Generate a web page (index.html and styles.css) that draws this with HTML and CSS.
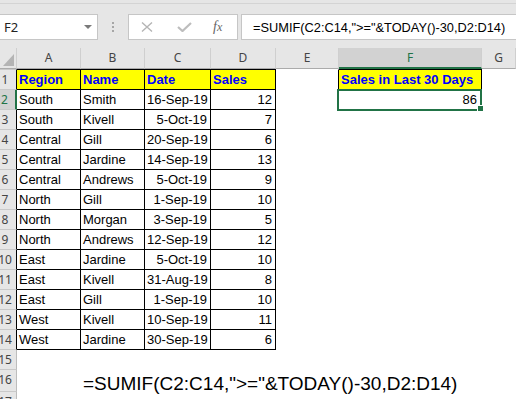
FILE: index.html
```html
<!DOCTYPE html>
<html lang="en">
<head>
  <meta charset="UTF-8" />
  <title>Sales in Last 30 Days</title>
  <link rel="stylesheet" href="styles.css">
</head>
<body>

<!-- Name box + formula bar -->
<div class="formula-bar">
  <div class="ribbon-edge"></div>
  <div class="bar-row">
    <div class="name-box"><span>F2</span><i class="caret"></i></div>
    <div class="grip"><b></b><b></b><b></b></div>
    <div class="bar-buttons">
      <svg class="btn-cancel" width="12" height="10" viewBox="0 0 12 10">
        <path d="M1 0.5 L11 9.5 M11 0.5 L1 9.5" stroke="#b5b5b5" stroke-width="1.4" fill="none"/>
      </svg>
      <svg class="btn-enter" width="15" height="10" viewBox="0 0 15 10">
        <path d="M1 5 L5.5 9 L14 1" stroke="#bdbdbd" stroke-width="2.2" fill="none"/>
      </svg>
      <span class="btn-fx"><i>f</i><i class="x">x</i></span>
    </div>
    <div class="formula-input">=SUMIF(C2:C14,"&gt;="&amp;TODAY()-30,D2:D14)</div>
  </div>
</div>

<!-- Worksheet -->
<div class="sheet" id="sheet"></div>

<script>
  const table = [
    ['Region', 'Name', 'Date', 'Sales'],
    ['South', 'Smith', '16-Sep-19', 12],
    ['South', 'Kivell', '5-Oct-19', 7],
    ['Central', 'Gill', '20-Sep-19', 6],
    ['Central', 'Jardine', '14-Sep-19', 13],
    ['Central', 'Andrews', '5-Oct-19', 9],
    ['North', 'Gill', '1-Sep-19', 10],
    ['North', 'Morgan', '3-Sep-19', 5],
    ['North', 'Andrews', '12-Sep-19', 12],
    ['East', 'Jardine', '5-Oct-19', 10],
    ['East', 'Kivell', '31-Aug-19', 8],
    ['East', 'Gill', '1-Sep-19', 10],
    ['West', 'Kivell', '10-Sep-19', 11],
    ['West', 'Jardine', '30-Sep-19', 6]
  ];
  const letters = ['A', 'B', 'C', 'D', 'E', 'F', 'G'];
  const sheet = document.getElementById('sheet');

  function cell(text, cls) {
    const d = document.createElement('div');
    d.className = 'cell ' + cls;
    d.textContent = text;
    sheet.appendChild(d);
    return d;
  }

  // column headers
  cell('', 'corner').innerHTML = '<i class="select-all"></i>';
  letters.forEach(l => cell(l, 'col-head' + (l === 'F' ? ' selected' : '')));

  for (let r = 1; r <= 17; r++) {
    const rowCls = r === 1 ? ' first' : '';
    let head = 'row-head' + rowCls;
    if (r <= 14) head += ' edge';
    if (r === 2) head += ' selected';
    cell(r, head);

    letters.forEach((l, c) => {
      let text = '';
      let cls = rowCls;
      if (r <= 14 && c < 4) {
        text = table[r - 1][c];
        cls += ' boxed';
        if (r === 1) cls += ' title';
        else if (c >= 2) cls += ' num';
      }
      if (r === 1 && l === 'E') cls += ' before-f';
      if (r === 1 && l === 'F') { text = 'Sales in Last 30 Days'; cls += ' boxed title'; }
      if (r === 2 && l === 'F') { text = 86; cls += ' boxed num active'; }
      if (r === 16 && l === 'B') { text = '=SUMIF(C2:C14,">="&TODAY()-30,D2:D14)'; cls += ' note'; }
      cell(text, cls);
    });
  }
</script>

</body>
</html>
```

FILE: styles.css
```css
body {
  margin: 0;
  width: 516px;
  height: 399px;
  overflow: hidden;
  background: #fff;
  font-family: "Liberation Sans", Arial, sans-serif;
}

/* formula bar */

.formula-bar {
  background: #e6e6e6;
  height: 48px;
}

.ribbon-edge {
  height: 3px;
  border-bottom: 1px solid #d4d4d4;
}

.bar-row {
  display: flex;
  margin-top: 10px;
  height: 26px;
}

.name-box {
  width: 98px;
  box-sizing: border-box;
  background: #fff;
  border: 1px solid #c6c6c6;
  border-left: none;
  display: flex;
  align-items: center;
  justify-content: space-between;
  padding: 0 5px 0 4px;
  font: 13px/24px "Noto Sans", sans-serif;
  color: #222;
}

.caret {
  width: 0;
  height: 0;
  border-left: 4px solid transparent;
  border-right: 4px solid transparent;
  border-top: 4px solid #7a7a7a;
}

.grip {
  width: 30px;
  display: flex;
  flex-direction: column;
  align-items: center;
  justify-content: center;
  gap: 2px;
}

.grip b {
  width: 2px;
  height: 2px;
  background: #a6a6a6;
}

.bar-buttons {
  width: 110px;
  box-sizing: border-box;
  background: #fff;
  border: 1px solid #c6c6c6;
  display: flex;
  align-items: center;
}

.btn-cancel { margin-left: 12px; }
.btn-enter { margin-left: 24px; }

.btn-fx {
  margin-left: 21px;
  font: 14px "Liberation Serif", serif;
  color: #666;
}

.btn-fx .x {
  font-size: 12px;
}

.formula-input {
  flex: 1;
  margin-left: 3px;
  background: #fff;
  border: 1px solid #c6c6c6;
  border-right: none;
  padding: 2px 0 0 11px;
  font-size: 12.8px;
  line-height: 22px;
  white-space: nowrap;
  overflow: hidden;
  color: #000;
}

/* worksheet grid */

.sheet {
  display: grid;
  width: calc(100% + 6px);
  margin-left: -6px;
  grid-template-columns: 23px 64px 64px 66px 65px 63px 143px 1fr;
  grid-template-rows: 21px 21px repeat(14, 20px) 22px 20px;
}

.cell {
  box-sizing: border-box;
  border-right: 1px solid transparent;
  border-bottom: 1px solid transparent;
  padding: 0 2px;
  font-size: 13px;
  line-height: 19px;
  white-space: nowrap;
  overflow: hidden;
  color: #000;
}

.cell.first {
  border-top: 1px solid transparent;
}

.corner,
.col-head {
  background: #e6e6e6;
  border-right-color: #cfcfcf;
  border-bottom-color: #ababab;
}

.corner {
  display: flex;
  align-items: flex-end;
  justify-content: flex-end;
  padding: 0 2px 2px 0;
}

.select-all {
  width: 11px;
  height: 12px;
  background: #b4b4b4;
  clip-path: polygon(100% 0, 100% 100%, 0 100%);
}

.col-head {
  text-align: center;
  font: 12px/20px "Noto Sans", sans-serif;
  color: #444;
}

.row-head {
  background: #e6e6e6;
  border-right-color: #bdbdbd;
  border-bottom-color: #c9c9c9;
  text-align: center;
  font: 12px/19px "Noto Sans", sans-serif;
  color: #444;
}

.row-head.first { border-top-color: #c9c9c9; }
.row-head.edge { border-right-color: #000; }

.col-head.selected,
.row-head.selected {
  background: #d2d2d2;
  color: #217346;
}

.col-head.selected { border-bottom: 2px solid #217346; }
.row-head.selected { border-right: 2px solid #217346; }

/* data range */

.boxed {
  border-right-color: #000;
  border-bottom-color: #000;
}

.boxed.first { border-top-color: #000; }
.before-f { border-right-color: #000; }

.title {
  background: #ffff00;
  color: #0000ff;
  font-weight: bold;
}

.num {
  text-align: right;
  padding-right: 3px;
}

.active {
  position: relative;
  overflow: visible;
  padding-right: 4px;
}

.active::after {
  content: '';
  position: absolute;
  top: -1px;
  left: -2px;
  right: -1px;
  bottom: -2px;
  border: 2px solid #217346;
}

.active::before {
  content: '';
  position: absolute;
  right: -3px;
  bottom: -3px;
  width: 5px;
  height: 5px;
  background: #217346;
  border: 1px solid #fff;
  z-index: 1;
}

.note {
  overflow: visible;
  font-size: 19px;
  line-height: 27px;
}
```
